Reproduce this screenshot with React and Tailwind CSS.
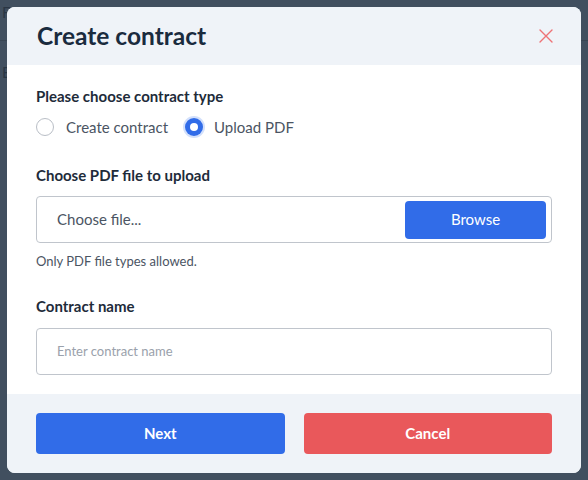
export default function App() {
  return (
    <div className="relative w-[588px] h-[480px] overflow-hidden bg-[#414f5f]" style={{ fontFamily: "Lato, 'Open Sans', sans-serif" }}>
      <div className="absolute left-0 top-0 w-full text-[15px] text-[#2a3644]">
        <div className="pl-[2px] pt-[2px] leading-[20px]">Fahrt 1234</div>
        <div className="mt-[18px] h-px bg-[#384553]" />
        <div className="pl-[2px] mt-[20px]">Ei</div>
      </div>
      <div className="absolute left-[7px] top-[7px] w-[574px] h-[466px] rounded-[8px] overflow-hidden bg-white flex flex-col">
        <div className="h-[58px] bg-[#eff3f8] flex items-center justify-between pl-[30px] pr-[28px] shrink-0">
          <h1 className="text-[24.5px] font-bold text-[#1a2b3e] leading-none">Create contract</h1>
          <svg width="14" height="14" viewBox="0 0 14 14" className="mt-[-1px]">
            <path d="M1 1 L13 13 M13 1 L1 13" stroke="#ee7276" strokeWidth="1.4" strokeLinecap="round" />
          </svg>
        </div>
        <div className="flex-1 px-[29px] pt-[21px]">
          <div className="text-[15px] font-bold text-[#1e2b3a] leading-[20px]">Please choose contract type</div>
          <div className="flex items-center mt-[11px] h-[20px]">
            <span className="w-[18px] h-[18px] rounded-full border border-[#b9bec6] bg-white" />
            <span className="ml-[12px] text-[15px] text-[#4b5563]">Create contract</span>
            <span className="ml-[15px] w-[22px] h-[22px] rounded-full bg-[#d3e0fb] flex items-center justify-center">
              <span className="w-[18px] h-[18px] rounded-full bg-[#316ce8] flex items-center justify-center">
                <span className="w-[8px] h-[8px] rounded-full bg-white" />
              </span>
            </span>
            <span className="ml-[9px] text-[15px] text-[#4b5563]">Upload PDF</span>
          </div>
          <div className="mt-[28px] text-[15px] font-bold text-[#1e2b3a] leading-[20px]">Choose PDF file to upload</div>
          <div className="mt-[11px] h-[47px] border border-[#c0c5cc] rounded-[4px] flex items-center justify-between pl-[20px] pr-[5px]">
            <span className="text-[15px] text-[#4b5563]">Choose file...</span>
            <button className="w-[141px] h-[38px] rounded-[4px] bg-[#316ce8] text-white text-[15px]">Browse</button>
          </div>
          <div className="mt-[9px] text-[13px] text-[#4b5563] leading-[18px]">Only PDF file types allowed.</div>
          <div className="mt-[26px] text-[15px] font-bold text-[#1e2b3a] leading-[20px]">Contract name</div>
          <div className="mt-[12px] h-[47px] border border-[#c0c5cc] rounded-[4px] flex items-center pl-[20px]">
            <span className="text-[13px] text-[#9aa1ab]">Enter contract name</span>
          </div>
        </div>
        <div className="h-[79px] bg-[#eff3f8] flex items-start gap-[19px] px-[29px] pt-[19px] shrink-0">
          <button className="flex-1 h-[41px] rounded-[4px] bg-[#316ce8] text-white text-[15px] font-bold">Next</button>
          <button className="flex-1 h-[41px] rounded-[4px] bg-[#e9585b] text-white text-[15px] font-bold">Cancel</button>
        </div>
      </div>
    </div>
  );
}
